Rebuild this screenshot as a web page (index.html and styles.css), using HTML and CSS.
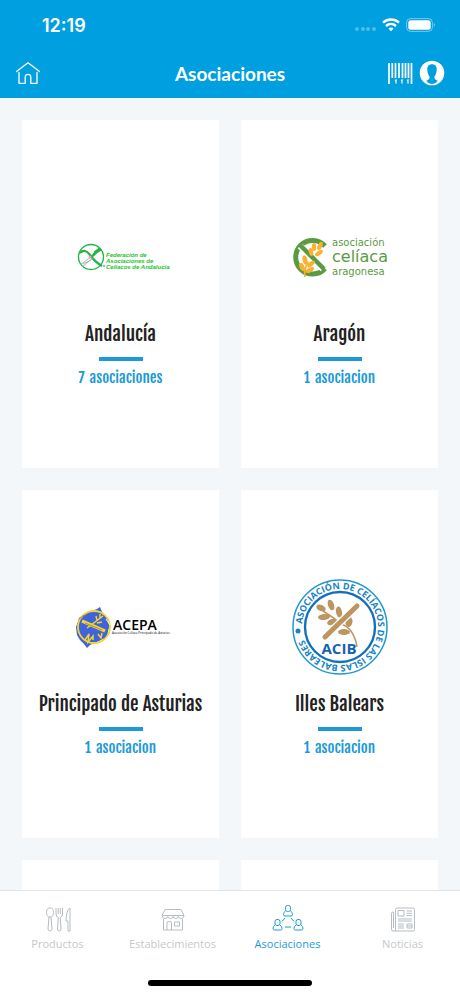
FILE: index.html
```
<!DOCTYPE html>
<html lang="es">
<head>
  <meta charset="utf-8">
  <meta name="viewport" content="width=device-width, initial-scale=1">
  <title>Asociaciones</title>
  <link rel="stylesheet" href="styles.css">
</head>
<body>
  <header>
    <div class="status">
      <span class="time">12:19</span>
      <div class="status-icons">
        <svg width="22" height="6" viewBox="0 0 22 6" fill="#fff" opacity=".3">
          <circle cx="3" cy="3" r="2"/><circle cx="9" cy="3" r="2"/><circle cx="14" cy="3" r="2"/><circle cx="20" cy="3" r="2"/>
        </svg>
        <svg width="18" height="14" viewBox="0 0 18 14" fill="none" stroke="#fff" stroke-width="2.4">
          <path d="M1 4.6C5.500 .4 12.500 .4 17 4.600"/>
          <path d="M4 8C7 5.200 11 5.200 14 8"/>
          <path d="M6.400 10.500Q9 8.300 11.600 10.500L9 13.300Z" fill="#fff" stroke="none"/>
        </svg>
        <svg width="30" height="14" viewBox="0 0 30 14">
          <rect x=".6" y=".6" width="25.800" height="12.800" rx="4" fill="none" stroke="#fff" opacity=".45"/>
          <rect x="2.300" y="2.300" width="22.400" height="9.400" rx="2.500" fill="#fff"/>
          <path d="M27.800 4.800Q30 7 27.800 9.200Z" fill="#fff" opacity=".5"/>
        </svg>
      </div>
    </div>
    <div class="navbar">
      <a class="home" href="#" aria-label="Inicio">
        <svg width="26" height="24" viewBox="0 0 26 24" fill="none" stroke="#fff" stroke-width="1.300" stroke-linejoin="round" stroke-linecap="round">
          <path d="M1.500 10.500L13 1.800L24.500 10.500"/>
          <path d="M4 11.500V22.300H10.200V16Q10.200 13.300 13 13.300T15.800 16V22.300H22V11.500"/>
        </svg>
      </a>
      <h1>Asociaciones</h1>
      <div class="actions">
        <button type="button" aria-label="Escanear">
          <svg width="26" height="22" viewBox="0 0 26 22" stroke="#fff" fill="none">
            <path d="M2 1V22M24.500 1V22" stroke-width="1.700"/>
            <path d="M5.300 1V16M8.500 1V16M12 1V16M15.500 1V16M18.500 1V16M21.500 1V16" stroke-width="1.700"/>
            <path d="M8 18.500L9 18V21.500M14 18.500L15 18V21.500M20 18.500L21 18V21.500" stroke-width="1.200"/>
          </svg>
        </button>
        <button type="button" aria-label="Perfil">
          <svg width="26" height="26" viewBox="0 0 26 26">
            <circle cx="13" cy="13" r="12.300" fill="#fff"/>
            <path d="M13 4.200C9.800 4.200 8 6.300 8.300 10C8.500 13.500 9.600 15.200 10.500 16.500C11 19 9.500 19.700 7.300 20.800C9 23 11 24 13 24S17 23 18.700 20.800C16.500 19.700 15 19 15.500 16.500C16.400 15.200 17.500 13.500 17.700 10C18 6.300 16.200 4.200 13 4.200Z" fill="#009fe0"/>
          </svg>
        </button>
      </div>
    </div>
  </header>

  <main>
    <article class="card">
      <svg class="logo" viewBox="0 0 96 96">
        <g fill="none" stroke="#22b545">
          <circle cx="18" cy="48" r="12.500" stroke-width="1.300"/>
          <path d="M7 44Q12 39 17 46T29 57M18 48Q24 44 27 39" stroke-width="2.200"/>
          <path d="M21 43L27 39M20 45L28 41" stroke-width="1.500"/>
          <path d="M18 48L7 56M20 49L9 58M18 51L10 55" stroke="#9aa39d" stroke-width=".8"/>
          <circle cx="17" cy="48" r="1.500" fill="#e8a3b0" stroke="none"/>
          <circle cx="31" cy="57" r="1" stroke="#66a5a0" stroke-width=".8"/>
        </g>
        <g class="fed-text">
          <text x="33" y="48">Federación de</text>
          <text x="33" y="54">Asociaciones de</text>
          <text x="33" y="60">Celíacos de Andalucía</text>
        </g>
      </svg>
      <h2>Andalucía</h2>
      <hr>
      <a class="count" href="#"><span>7</span> <span>asociaciones</span></a>
    </article>

    <article class="card">
      <svg class="logo" viewBox="0 0 96 96">
        <path d="M33 37A16.800 16.800 0 1 0 33 59.500" fill="none" stroke="#5a9b42" stroke-width="5"/>
        <path d="M8 37L31 60" stroke="#fff" stroke-width="6.500"/>
        <path d="M8 36L32 60" stroke="#5a9b42" stroke-width="4.500"/>
        <g fill="#fbb034">
          <ellipse cx="22" cy="38" rx="2.200" ry="4"/>
          <ellipse cx="28" cy="37" rx="2.200" ry="4.500" transform="rotate(25 28 37)"/>
          <ellipse cx="19" cy="43" rx="2.200" ry="4" transform="rotate(-12 19 43)"/>
          <ellipse cx="27" cy="44" rx="2.200" ry="4.500" transform="rotate(55 27 44)"/>
          <ellipse cx="13" cy="51" rx="2.400" ry="4.500" transform="rotate(-12 13 51)"/>
          <ellipse cx="19" cy="55" rx="2.200" ry="4.500" transform="rotate(50 19 55)"/>
          <ellipse cx="10" cy="58" rx="2.400" ry="4.500" transform="rotate(-25 10 58)"/>
          <ellipse cx="18" cy="61" rx="2.200" ry="4.500" transform="rotate(60 18 61)"/>
          <path d="M12 68Q11 58 16 52L17 53Q13 60 13.500 68Z"/>
        </g>
        <g class="aragon-text">
          <text x="40" y="37">asociación</text>
          <text class="big" x="40" y="53">celíaca</text>
          <text x="40" y="66">aragonesa</text>
        </g>
      </svg>
      <h2>Aragón</h2>
      <hr>
      <a class="count" href="#"><span>1</span> <span>asociacion</span></a>
    </article>

    <article class="card">
      <svg class="logo" viewBox="0 0 96 96">
        <path d="M6 39L13 34L24 30L27 28L29 33L34 38L37 45L35 52L34 58L26 62L17 66L14 69L11 65L7 61L4 56L3 48Z" fill="#3f62dd"/>
        <circle cx="21" cy="48" r="16" fill="none" stroke="#f3d52d" stroke-width="1.800"/>
        <g stroke="#f3d52d" fill="none">
          <path d="M9 42L32 52" stroke-width="3.500"/>
          <path d="M14 49L30 37M24 41L23 37M27 39L27 35M24 44L29 43M12 61L16 55L15 63L20 57L20 61M25 55L28 59L29 54" stroke-width="1.500"/>
        </g>
        <path d="M12 44L29 51M11 36L6 40" stroke="#574c4b" stroke-width=".5"/>
        <path d="M33 40L37 46M32 62L35 58" stroke="#fff" stroke-width="1"/>
        <text class="acepa" x="40" y="51">ACEPA</text>
        <text class="acepa-sub" x="39" y="55">Asociación Celíaca Principado de Asturias</text>
      </svg>
      <h2>Principado de Asturias</h2>
      <hr>
      <a class="count" href="#"><span>1</span> <span>asociacion</span></a>
    </article>

    <article class="card">
      <svg class="logo" viewBox="0 0 96 96">
        <circle cx="48" cy="48" r="47" fill="none" stroke="#2396cf" stroke-width="1.500"/>
        <circle cx="48" cy="48" r="35" fill="none" stroke="#1471b8" stroke-width="2.400"/>
        <path id="ring" d="M10 47A38 38 0 1 1 10 49" fill="none"/>
        <text class="ring-text"><textPath href="#ring" startOffset="2">ASOCIACIÓN DE CELÍACOS DE LAS ISLAS BALEARES</textPath></text>
        <circle cx="6" cy="52" r="2.500" fill="#1782c5"/>
        <g fill="#bd9560">
          <ellipse cx="29" cy="29" rx="5" ry="3" transform="rotate(25 29 29)"/>
          <ellipse cx="39" cy="26" rx="3" ry="5.500" transform="rotate(-20 39 26)"/>
          <ellipse cx="32" cy="38" rx="6" ry="3" transform="rotate(-5 32 38)"/>
          <ellipse cx="47" cy="33" rx="3" ry="5.500" transform="rotate(-10 47 33)"/>
          <ellipse cx="40" cy="43" rx="5" ry="3" transform="rotate(-20 40 43)"/>
          <ellipse cx="57" cy="43" rx="3.500" ry="5" transform="rotate(10 57 43)"/>
          <ellipse cx="52" cy="53" rx="6" ry="3"/>
        </g>
        <path d="M31 32Q41 38 49 45Q62 49 65 68" fill="none" stroke="#bd9560" stroke-width="1.500"/>
        <path d="M33 58L65 27" stroke="#fff" stroke-width="7.500" stroke-linecap="round"/>
        <path d="M33 58L65 27" stroke="#bd9560" stroke-width="5" stroke-linecap="round"/>
        <text class="acib" x="47" y="75">ACIB</text>
      </svg>
      <h2>Illes Balears</h2>
      <hr>
      <a class="count" href="#"><span>1</span> <span>asociacion</span></a>
    </article>

    <article class="card"></article>
    <article class="card"></article>
  </main>

  <footer>
    <nav>
      <a href="#">
        <svg width="32" height="28" viewBox="0 0 32 28">
          <ellipse cx="8" cy="7.500" rx="3.500" ry="4.500"/>
          <path d="M7 12L6 24Q6 26 8 26T10 24L9 12"/>
          <path d="M14 3V9Q14 12 16.300 12.500L15.500 24Q15.500 26 17.300 26T19 24L18.200 12.500Q20.500 12 20.500 9V3M16.200 3V9M18.300 3V9"/>
          <path d="M28 3Q24 6 24 16H26V26H28Z"/>
        </svg>
        Productos
      </a>
      <a href="#">
        <svg width="32" height="28" viewBox="0 0 32 28">
          <path d="M8 4.500H24L27 10.500H5Z"/>
          <path d="M5 10.500Q5.500 13.500 8 13.500T10.700 11.500Q11 13.500 13.400 13.500T16 11.500Q16.500 13.500 18.700 13.500T21.300 11.500Q22 13.500 24.300 13.500T27 10.500"/>
          <path d="M6.500 14V25H25.500V14M10 25V18Q10 16.500 11.500 16.500H13Q14.500 16.500 14.500 18V25M17.500 17H22.500V21H17.500Z"/>
        </svg>
        Establecimientos
      </a>
      <a class="active" href="#">
        <svg width="32" height="28" viewBox="0 0 32 28">
          <g id="person">
            <rect x="13.500" y=".5" width="5" height="6" rx="2"/>
            <path d="M13.500 6Q11.500 7 11.500 9.500Q11.500 11 13 11H19Q20.500 11 20.500 9.500Q20.500 7 18.500 6"/>
          </g>
          <use href="#person" x="-10.500" y="14"/>
          <use href="#person" x="10.500" y="14"/>
          <path d="M13 13L10 16.500M19 13L22 16.500M13 22H19"/>
        </svg>
        Asociaciones
      </a>
      <a href="#">
        <svg width="32" height="28" viewBox="0 0 32 28">
          <path d="M8.500 26V4.500Q8.500 3 10 3H26Q27.500 3 27.500 4.500V24.500Q27.500 26 26 26H6Q4.500 26 4.500 24V8.500Q4.500 7 6 7H6.500V23"/>
          <rect x="11" y="5.500" width="6" height="5.500"/>
          <path d="M19.500 6H25M19.500 8.300H25M19.500 10.600H25M11 14H25M11 16H25M11 19H17M11 21H17M11 23H17M20 19H25V23H20ZM20 21H25"/>
        </svg>
        Noticias
      </a>
    </nav>
    <div class="home-indicator"></div>
  </footer>
</body>
</html>
```

FILE: styles.css
```
* {
  box-sizing: border-box;
}

body {
  display: flex;
  flex-direction: column;
  height: 100vh;
  margin: 0;
  background-color: #f3f7f9;
  font-family: "Open Sans", sans-serif;
}

a {
  color: inherit;
  text-decoration: none;
}

button {
  display: flex;
  padding: 0;
  border: none;
  background: none;
  cursor: pointer;
}

header {
  flex: none;
  background-color: #009fe0;
  color: #fff;
}

.status {
  display: flex;
  justify-content: space-between;
  align-items: center;
  height: 50px;
  padding: 0 24px 0 42px;
}

.time {
  font-family: Inter, sans-serif;
  font-size: 18px;
  font-weight: 600;
}

.status-icons {
  display: flex;
  align-items: center;
  gap: 6px;
}

.status-icons svg:first-child {
  align-self: flex-end;
}

.navbar {
  display: grid;
  grid-template-columns: 1fr auto 1fr;
  align-items: center;
  height: 48px;
  padding: 0 15px 2px;
}

.home svg {
  display: block;
}

h1 {
  margin: 0;
  font-family: Lato, sans-serif;
  font-size: 19px;
  font-weight: 700;
}

.actions {
  display: flex;
  justify-content: flex-end;
  align-items: center;
  gap: 6px;
}

main {
  display: grid;
  grid-template-columns: 1fr 1fr;
  grid-auto-rows: max-content;
  gap: 22px;
  flex: 1;
  min-height: 0;
  padding: 22px;
  overflow-y: auto;
  scrollbar-width: none;
}

.card {
  display: flex;
  flex-direction: column;
  align-items: center;
  min-height: 348px;
  padding: 89px 8px 78px;
  background-color: #fff;
  text-align: center;
}

.logo {
  width: 96px;
  height: 96px;
  overflow: visible;
}

h2 {
  margin: 14px 0 8px;
  color: #222;
  font-family: "Fjalla One", "Liberation Sans Narrow", sans-serif;
  font-size: 19px;
  font-weight: 400;
  line-height: 30px;
}

hr {
  width: 44px;
  height: 4px;
  margin: 0 0 6px;
  border: none;
  background-color: #1c9ad6;
}

.count {
  display: flex;
  gap: 5px;
  color: #1c9ad6;
  font-family: "Fjalla One", "Liberation Sans Narrow", sans-serif;
  font-size: 15px;
  line-height: 22px;
}

/* text inside the logos */
.fed-text {
  fill: #1cc42c;
  font: italic bold 6px "Liberation Sans", sans-serif;
}

.aragon-text {
  fill: #5a9b42;
  font: 10px "DejaVu Sans", sans-serif;
}

.aragon-text .big {
  font-size: 16px;
}

.acepa {
  font: 600 14px "Open Sans", sans-serif;
}

.acepa-sub {
  font: 3px "Open Sans", sans-serif;
}

.ring-text {
  fill: #1782c5;
  font: bold 9px "Open Sans", sans-serif;
}

.acib {
  fill: #1265ae;
  font: bold 15px "Open Sans", sans-serif;
  text-anchor: middle;
}

footer {
  flex: none;
  padding: 14px 0 10px;
  border-top: 1px solid #dfe5e8;
  background-color: #fff;
}

nav {
  display: grid;
  grid-template-columns: repeat(4, 1fr);
}

nav a {
  display: flex;
  flex-direction: column;
  align-items: center;
  gap: 2px;
  color: #c3c9cc;
  font-size: 11px;
  line-height: 18px;
}

nav svg {
  fill: none;
  stroke: #b5bdc1;
  stroke-linejoin: round;
}

nav .active {
  color: #1c9ad6;
}

nav .active svg {
  stroke: #1c9ad6;
}

.home-indicator {
  width: 164px;
  height: 6px;
  margin: 27px auto 0;
  border-radius: 3px;
  background-color: #000;
}
```
